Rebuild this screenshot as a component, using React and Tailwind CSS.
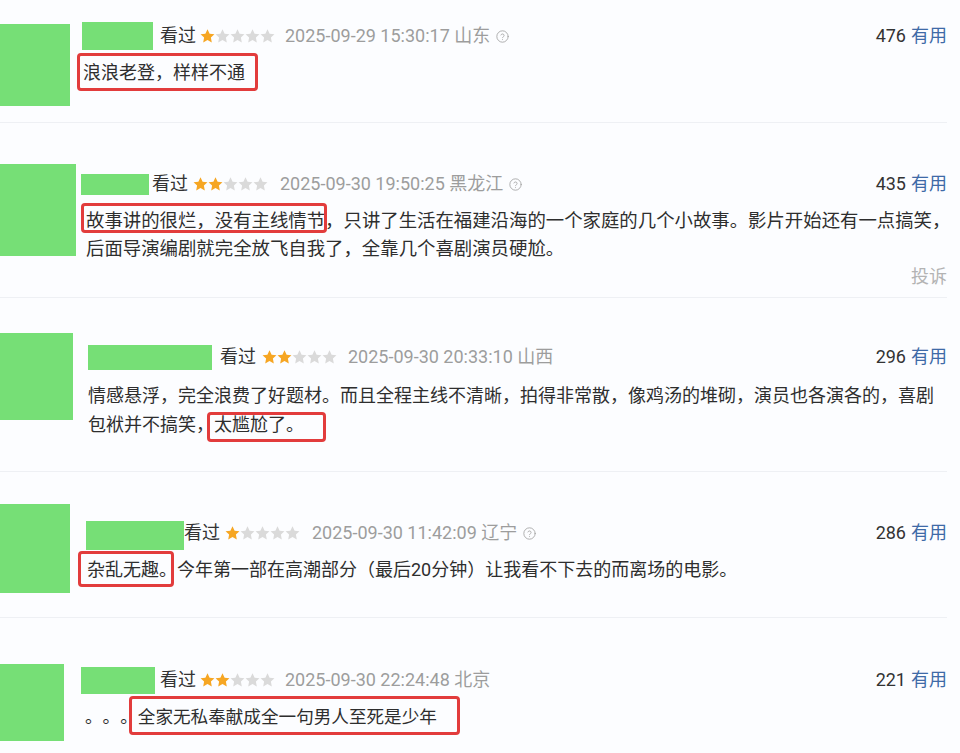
import React from 'react'

function Stars({ n }) {
  return (
    <span className="flex">
      {[0, 1, 2, 3, 4].map((i) => (
        <svg key={i} width="15" height="15" viewBox="1 1.5 22 22">
          <path
            d="M12 1.8l3.1 6.5 7.1.9-5.2 4.9 1.3 7.1L12 17.7l-6.3 3.5 1.3-7.1-5.2-4.9 7.1-.9z"
            fill={i < n ? '#f6a623' : '#dadada'}
          />
        </svg>
      ))}
    </span>
  )
}

function HelpIcon() {
  return (
    <svg width="13" height="13" viewBox="0 0 24 24" fill="none" stroke="#a3a3a3" strokeWidth="1.6" strokeLinecap="round" className="ml-[6px]">
      <circle cx="12" cy="12" r="10.5" />
      <path d="M9.1 9.2a3 3 0 0 1 5.8 1c0 2-2.9 2.6-2.9 4" />
      <path d="M12 17.6h.01" />
    </svg>
  )
}

function Mark({ box, children }) {
  return (
    <span className="relative inline-block">
      {children}
      <span className={`pointer-events-none absolute rounded-[4px] border-[3px] border-[#e23c3c] ${box}`} />
    </span>
  )
}

const reviews = [
  {
    section: 'h-[123px] border-b border-[#eef0f4]',
    avatar: 'mt-[24px] w-[70px] h-[82px]',
    column: 'ml-[12px]',
    header: 'mt-[22px]',
    name: 'w-[71px] h-[28px]',
    seen: 'ml-[7px]',
    stars: 'ml-[4px]',
    date: 'ml-[10px]',
    rating: 1,
    time: '2025-09-29 15:30:17 山东',
    help: true,
    useful: 476,
    body: 'mt-[9px] pl-[1px] leading-[28px]',
    text: <Mark box="-left-[6px] -top-[6px] w-[181px] h-[38px]">浪浪老登，样样不通</Mark>,
  },
  {
    section: 'h-[175px] border-b border-[#eef0f4]',
    avatar: 'mt-[41px] w-[76px] h-[92px]',
    column: 'ml-[4px]',
    header: 'mt-[47px]',
    name: 'ml-[1px] w-[68px] h-[21px]',
    seen: 'ml-[3px]',
    stars: 'ml-[5px]',
    date: 'ml-[12px]',
    rating: 2,
    time: '2025-09-30 19:50:25 黑龙江',
    help: true,
    useful: 435,
    body: 'mt-[9px] pl-[6px] text-[18.4px] leading-[28px]',
    text: (
      <>
        <Mark box="-left-[5px] -top-[4px] w-[246px] h-[30px]">故事讲的很烂，没有主线情节</Mark>
        ，只讲了生活在福建沿海的一个家庭的几个小故事。影片开始还有一点搞笑，
        <br />
        后面导演编剧就完全放飞自我了，全靠几个喜剧演员硬尬。
      </>
    ),
    report: true,
  },
  {
    section: 'h-[174px] border-b border-[#eef0f4]',
    avatar: 'mt-[35px] w-[73px] h-[87px]',
    column: 'ml-[15px]',
    header: 'mt-[45px]',
    name: 'w-[124px] h-[25px]',
    seen: 'ml-[8px]',
    stars: 'ml-[6px]',
    date: 'ml-[11px]',
    rating: 2,
    time: '2025-09-30 20:33:10 山西',
    help: false,
    useful: 296,
    body: 'mt-[10px] leading-[29px]',
    text: (
      <>
        情感悬浮，完全浪费了好题材。而且全程主线不清晰，拍得非常散，像鸡汤的堆砌，演员也各演各的，喜剧
        <br />
        包袱并不搞笑，
        <Mark box="-left-[7px] top-[2px] w-[119px] h-[30px]">太尴尬了。</Mark>
      </>
    ),
  },
  {
    section: 'h-[146px] border-b border-[#eef0f4]',
    avatar: 'mt-[32px] w-[70px] h-[89px]',
    column: 'ml-[16px]',
    header: 'mt-[47px]',
    name: 'mt-[4px] w-[98px] h-[29px]',
    seen: 'ml-0',
    stars: 'ml-[5px]',
    date: 'ml-[12px]',
    rating: 1,
    time: '2025-09-30 11:42:09 辽宁',
    help: true,
    useful: 286,
    body: 'mt-[9px] pl-[1px] leading-[28px]',
    text: (
      <>
        <Mark box="-left-[9px] -top-[5px] w-[96px] h-[36px]">杂乱无趣。</Mark>
        今年第一部在高潮部分（最后20分钟）让我看不下去的而离场的电影。
      </>
    ),
  },
  {
    section: 'h-[135px]',
    avatar: 'mt-[46px] w-[64px] h-[77px]',
    column: 'ml-[17px]',
    header: 'mt-[48px]',
    name: 'w-[74px] h-[27px]',
    seen: 'ml-[5px]',
    stars: 'ml-[4px]',
    date: 'ml-[10px]',
    rating: 2,
    time: '2025-09-30 22:24:48 北京',
    help: false,
    useful: 221,
    body: 'mt-[9px] pl-[4px] text-[17.6px] leading-[28px]',
    text: (
      <>
        。。。
        <Mark box="-left-[9px] -top-[7px] w-[331px] h-[39px]">全家无私奉献成全一句男人至死是少年</Mark>
      </>
    ),
  },
]

function Review({ r }) {
  return (
    <div className={`flex w-[947px] items-start ${r.section}`}>
      <div className={`shrink-0 bg-[#76df76] ${r.avatar}`} />
      <div className={`flex min-w-0 flex-1 flex-col ${r.column}`}>
        <div className={`flex h-[28px] items-center whitespace-nowrap ${r.header}`}>
          <div className={`shrink-0 bg-[#76df76] ${r.name}`} />
          <span className={`text-[#333] ${r.seen}`}>看过</span>
          <span className={r.stars}>
            <Stars n={r.rating} />
          </span>
          <span className={`text-[#9d9d9d] ${r.date}`}>{r.time}</span>
          {r.help && <HelpIcon />}
          <span className="ml-auto">
            <span className="text-[#333]">{r.useful}</span>
            <span className="ml-[5px] text-[#3f6aa7]">有用</span>
          </span>
        </div>
        <div className={`whitespace-nowrap text-[#2e2e2e] ${r.body}`}>{r.text}</div>
        {r.report && <div className="text-right leading-[28px] text-[#b3b3b3]">投诉</div>}
      </div>
    </div>
  )
}

export default function App() {
  return (
    <div className="h-[753px] w-[960px] overflow-hidden bg-[#fcfdff] font-['Roboto','Noto_Sans_CJK_SC',sans-serif] text-[18px] leading-[28px] [text-spacing-trim:space-all]">
      {reviews.map((r, i) => (
        <Review key={i} r={r} />
      ))}
    </div>
  )
}
